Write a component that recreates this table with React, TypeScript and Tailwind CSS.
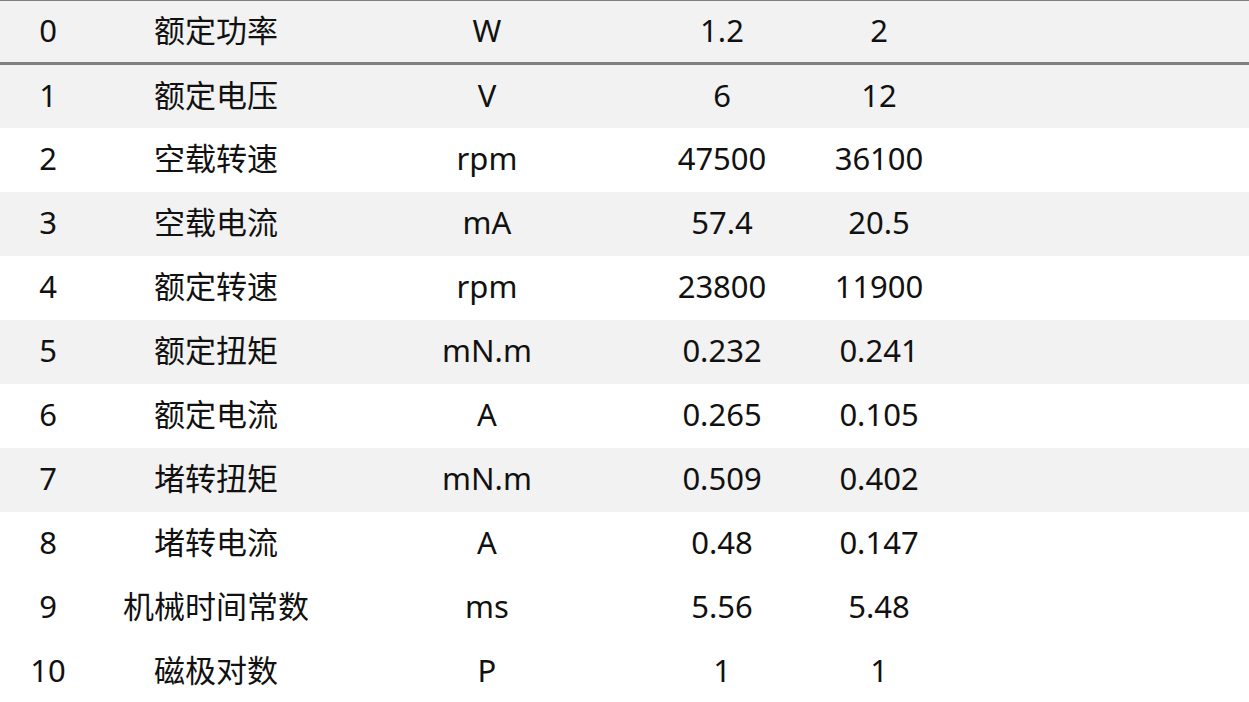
const rows: [string, string, string, string, string][] = [
  ['1', '额定电压', 'V', '6', '12'],
  ['2', '空载转速', 'rpm', '47500', '36100'],
  ['3', '空载电流', 'mA', '57.4', '20.5'],
  ['4', '额定转速', 'rpm', '23800', '11900'],
  ['5', '额定扭矩', 'mN.m', '0.232', '0.241'],
  ['6', '额定电流', 'A', '0.265', '0.105'],
  ['7', '堵转扭矩', 'mN.m', '0.509', '0.402'],
  ['8', '堵转电流', 'A', '0.48', '0.147'],
  ['9', '机械时间常数', 'ms', '5.56', '5.48'],
  ['10', '磁极对数', 'P', '1', '1'],
];

function Cells({ r }: { r: string[] }) {
  return (
    <>
      <div className="w-[96px] text-center">{r[0]}</div>
      <div className="w-[240px] text-center">{r[1]}</div>
      <div className="w-[302px] text-center">{r[2]}</div>
      <div className="w-[168px] text-center">{r[3]}</div>
      <div className="w-[146px] text-center">{r[4]}</div>
    </>
  );
}

export default function App() {
  return (
    <div
      className="w-[1249px] h-[702px] overflow-hidden bg-white text-[31px] leading-none text-[#111]"
      style={{ fontFamily: '"Noto Sans", "Noto Sans CJK SC", sans-serif' }}
    >
      {/* header row */}
      <div className="flex items-center pb-[3px] h-[65px] bg-[#f2f2f2] border-t border-b-[3px] border-[#808080]">
        <Cells r={['0', '额定功率', 'W', '1.2', '2']} />
      </div>
      {rows.map((r, i) => {
        // 1..7 alternate gray/white, the last rows are plain white
        const gray = i % 2 === 0 && i < 7;
        return (
          <div
            key={r[0]}
            className={`flex items-center pb-[3px] ${i === 0 ? 'h-[63px]' : 'h-16'} ${gray ? 'bg-[#f2f2f2]' : 'bg-white'}`}
          >
            <Cells r={r} />
          </div>
        );
      })}
    </div>
  );
}
